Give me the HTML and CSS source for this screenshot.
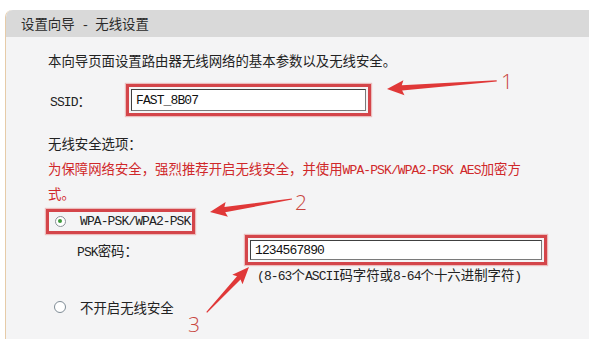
FILE: index.html
```html
<!DOCTYPE html>
<html lang="zh-CN">
<head>
<meta charset="utf-8">
<title>设置向导 - 无线设置</title>
<link rel="stylesheet" href="styles.css">
</head>
<body>
<div class="page">
  <div class="panel">
    <div class="header">设置向导<span class="m sep"> - </span>无线设置</div>
    <div class="content">
      <p class="intro">本向导页面设置路由器无线网络的基本参数以及无线安全。</p>
      <div class="row ssid-row">
        <span class="label ssid-label"><span class="m">SSID</span>：</span>
        <span class="hl"><span class="field ssid-field m">FAST_8B07</span></span>
      </div>
      <p class="title">无线安全选项：</p>
      <p class="warn">为保障网络安全，强烈推荐开启无线安全，并使用<span class="m">WPA-PSK/WPA2-PSK AES</span>加密方<br>式。</p>
      <div class="hl radio-box">
        <span class="radio checked"></span>
        <span class="m">WPA-PSK/WPA2-PSK</span>
      </div>
      <div class="row psk-row">
        <span class="label psk-label"><span class="m">PSK</span>密码：</span>
        <span class="hl"><span class="field psk-field m">1234567890</span></span>
      </div>
      <p class="hint"><span class="m">(8-63</span>个<span class="m">ASCII</span>码字符或<span class="m">8-64</span>个十六进制字符<span class="m">)</span></p>
      <div class="row none-row">
        <span class="radio"></span>
        <span>不开启无线安全</span>
      </div>
    </div>
  </div>
  <svg class="notes" width="589" height="339" viewBox="0 0 589 339">
    <g fill="#e03838">
      <polygon transform="translate(387 89) rotate(-4.2)" points="0,0 17,-7.5 15,-2.6 110,-0.6 110,0.6 15,2.6 17,7.5"/>
      <polygon transform="translate(210 212) rotate(-9)" points="0,0 17,-7.5 15,-2.6 83,-0.6 83,0.6 15,2.6 17,7.5"/>
      <polygon transform="translate(249 267) rotate(133)" points="0,0 17,-7 15,-2.4 62,-0.6 62,0.6 15,2.4 17,7"/>
    </g>
    <g class="num" fill="#c8453e">
      <text x="501" y="89">1</text>
      <text x="295" y="210">2</text>
      <text x="188" y="332">3</text>
    </g>
  </svg>
</div>
</body>
</html>
```

FILE: styles.css
```css
html, body {
  margin: 0;
  padding: 0;
  background: #ffffff;
}

body {
  font-family: "Noto Sans CJK SC", "Liberation Sans", sans-serif;
  font-size: 13.4px;
  color: #222222;
}

.m {
  font-family: "Liberation Mono", "Noto Sans CJK SC", monospace;
  font-size: 13px;
  letter-spacing: -0.9px;
}

.page {
  position: relative;
  width: 589px;
  height: 339px;
  overflow: hidden;
  padding: 10px 0 0 5px;
  box-sizing: border-box;
}

.panel {
  border-left: 1px solid #e6cba8;
  border-top-left-radius: 7px;
  background: #f4f4f5;
  height: 340px;
  overflow: hidden;
}

.header {
  height: 27px;
  line-height: 27px;
  background: #d9d9d9;
  padding-left: 15px;
  color: #2a2a2a;
  border-top-left-radius: 7px;
}

.header .sep {
  white-space: pre;
}

.content {
  padding: 14px 0 0 42px;
}

p {
  margin: 0;
}

.intro {
  line-height: 18px;
}

.row {
  display: flex;
  align-items: center;
}

.ssid-row {
  margin-top: 15px;
}

.label {
  flex: none;
}

.ssid-label {
  margin-left: 2px;
  width: 76px;
}

.hl {
  display: inline-flex;
  align-items: center;
  border: 3px solid #d4454a;
  box-shadow: 0 0 1px 1px rgba(226, 120, 120, 0.45);
  padding: 2px;
}

.field {
  display: flex;
  align-items: center;
  box-sizing: border-box;
  background: #ffffff;
  border: 1px solid #7a7a7a;
  border-top-color: #404040;
  border-left-color: #404040;
  padding-left: 4px;
  color: #111111;
}

.ssid-field {
  width: 235px;
  height: 22px;
}

.title {
  margin-top: 18px;
  line-height: 18px;
}

.warn {
  margin-top: 5px;
  line-height: 23px;
  color: #d0282a;
}

.radio-box {
  display: flex;
  box-sizing: border-box;
  margin-top: 4px;
  margin-left: -2px;
  width: 149px;
  height: 25px;
  padding: 0 0 0 6px;
  gap: 14px;
}

.radio {
  flex: none;
  box-sizing: border-box;
  width: 12px;
  height: 12px;
  border-radius: 50%;
  border: 1.5px solid #7f8c96;
  background: #ffffff;
  position: relative;
}

.radio.checked {
  width: 11px;
  height: 11px;
  border-color: #8a9096;
}

.radio.checked::after {
  content: "";
  position: absolute;
  left: 2px;
  top: 2px;
  width: 4px;
  height: 4px;
  border-radius: 50%;
  background: #3f9a3c;
}

.psk-row {
  margin-top: 1px;
}

.psk-label {
  margin-left: 29px;
  width: 168px;
}

.psk-field {
  width: 292px;
  height: 20px;
}

.hint {
  margin-top: 1px;
  margin-left: 209px;
  line-height: 17px;
}

.none-row {
  margin-top: 13px;
  margin-left: 6px;
  gap: 14px;
  line-height: 18px;
}

.notes {
  position: absolute;
  left: 0;
  top: 0;
  pointer-events: none;
}

.num text {
  font-family: "Open Sans", "Liberation Sans", sans-serif;
  font-size: 21px;
  font-weight: 300;
}
```
